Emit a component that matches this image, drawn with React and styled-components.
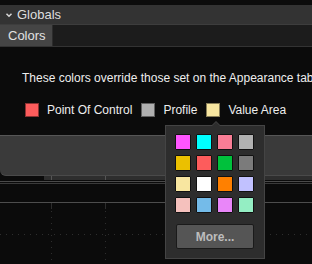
import React from 'react';
import styled, { createGlobalStyle } from 'styled-components';

const GlobalStyle = createGlobalStyle`
  html, body {
    margin: 0;
    padding: 0;
    background: #0b0b0b;
    overflow: hidden;
  }
  body {
    font-family: 'Liberation Sans', Arial, sans-serif;
    color: #e6e6e6;
  }
`;

const legend = [
  { label: 'Point Of Control', color: '#fd5c5c' },
  { label: 'Profile', color: '#b0b0b0' },
  { label: 'Value Area', color: '#f8e6a0' },
];

const palette = [
  '#ff55ff', '#00ffff', '#f97d95', '#b1b1b1',
  '#ebc000', '#fd5c5c', '#00c13c', '#7b7b7b',
  '#f8e6a0', '#ffffff', '#ff8000', '#c1c1ff',
  '#f5c1bd', '#74bbe9', '#e986f9', '#94eec3',
];

const App = () => (
  <Page>
    <GlobalStyle />
    <TopGap />
    <Header>
      <Chevron viewBox="0 0 8 8">
        <path d="M1.5 2.8 L4 5.2 L6.5 2.8" />
      </Chevron>
      Globals
    </Header>
    <TabBar>
      <Tab>Colors</Tab>
    </TabBar>

    <Content>
      <Description>These colors override those set on the Appearance tab</Description>
      <Legend>
        {legend.map((item) => (
          <LegendItem key={item.label}>
            <Swatch color={item.color} />
            <span>{item.label}</span>
          </LegendItem>
        ))}
      </Legend>

      <Popover>
        <Grid>
          {palette.map((c) => (
            <Cell key={c} color={c} />
          ))}
        </Grid>
        <MoreButton>More...</MoreButton>
      </Popover>
    </Content>

    <Panel />
    <Chart width="312" height="88" viewBox="0 0 312 88">
      <rect x="44" y="0" width="268" height="4" fill="#2e2e2e" />
      <line x1="51.5" y1="0" x2="51.5" y2="4" stroke="#555" />
      <line x1="105.5" y1="0" x2="105.5" y2="4" stroke="#555" />
      <line x1="0" y1="5.5" x2="312" y2="5.5" stroke="#4a4a4a" />
      <line x1="0" y1="7.5" x2="312" y2="7.5" stroke="#3a3a3a" />
      <line x1="0" y1="26.5" x2="312" y2="26.5" stroke="#4d4d4d" />
      <line x1="51.5" y1="27" x2="51.5" y2="33" stroke="#2c2c2c" />
      <line x1="105.5" y1="27" x2="105.5" y2="33" stroke="#2c2c2c" />
      <g stroke="#2e2e2e" strokeDasharray="1 5">
        <line x1="51.5" y1="35" x2="51.5" y2="88" />
        <line x1="105.5" y1="35" x2="105.5" y2="88" />
        <line x1="0" y1="58.5" x2="312" y2="58.5" />
      </g>
    </Chart>
  </Page>
);

const Page = styled.div`
  width: 312px;
  height: 264px;
  display: flex;
  flex-direction: column;
`;

const TopGap = styled.div`
  height: 5px;
  background: #0c0c0c;
`;

const Header = styled.div`
  height: 19px;
  display: flex;
  align-items: center;
  gap: 4px;
  padding-left: 5px;
  background: #333333;
  border-bottom: 1px solid #3d3d3d;
  font-size: 13px;
  color: #dedede;
`;

const Chevron = styled.svg`
  width: 8px;
  height: 8px;
  fill: none;
  stroke: #d8d8d8;
  stroke-width: 1.5;
`;

const TabBar = styled.div`
  height: 21px;
  display: flex;
  background: #1c1c1c;
  border-bottom: 1px solid #333;
`;

const Tab = styled.div`
  width: 53px;
  display: flex;
  align-items: center;
  padding-left: 8px;
  box-sizing: border-box;
  background: #454545;
  border-right: 1px solid #2c2c2c;
  font-size: 13px;
  color: #e2e2e2;
`;

const Content = styled.div`
  position: relative;
  height: 88px;
  box-sizing: border-box;
  padding: 24px 0 0 22px;
`;

const Description = styled.div`
  font-size: 12px;
  line-height: 14px;
  white-space: nowrap;
  color: #eeeeee;
`;

const Legend = styled.div`
  display: flex;
  gap: 9px;
  margin-top: 18px;
  padding-left: 3px;
`;

const LegendItem = styled.div`
  display: flex;
  align-items: center;
  gap: 8px;
  font-size: 12px;
  line-height: 14px;
  color: #eeeeee;
`;

const Swatch = styled.div`
  width: 14px;
  height: 14px;
  box-sizing: border-box;
  background: ${({ color }) => color};
  border: 1px solid rgba(0, 0, 0, 0.45);
`;

const Popover = styled.div`
  position: absolute;
  left: 165px;
  top: 78px;
  width: 100px;
  height: 134px;
  box-sizing: border-box;
  padding: 8px 9px 0 9px;
  background: #2d2d2d;
  border: 1px solid #444;
  z-index: 2;

  &::before {
    content: '';
    position: absolute;
    left: 45px;
    top: -5px;
    border-left: 5px solid transparent;
    border-right: 5px solid transparent;
    border-bottom: 5px solid #444;
  }
  &::after {
    content: '';
    position: absolute;
    left: 46px;
    top: -4px;
    border-left: 4px solid transparent;
    border-right: 4px solid transparent;
    border-bottom: 4px solid #2d2d2d;
  }
`;

const Grid = styled.div`
  display: grid;
  grid-template-columns: repeat(4, 16px);
  gap: 5px;
`;

const Cell = styled.div`
  width: 16px;
  height: 16px;
  box-sizing: border-box;
  background: ${({ color }) => color};
  border: 1px solid #111;
  border-radius: 1px;
`;

const MoreButton = styled.div`
  margin: 11px 0 0 1px;
  width: 78px;
  height: 25px;
  box-sizing: border-box;
  display: flex;
  align-items: center;
  justify-content: center;
  background: #555555;
  border: 1px solid #1a1a1a;
  border-radius: 2px;
  font-size: 12px;
  font-weight: bold;
  color: #bdbdbd;
`;

const Panel = styled.div`
  height: 41px;
  box-sizing: border-box;
  background: #3a3a3a;
  border-top: 1px solid #565656;
  border-bottom: 1px solid #4a4a4a;
  border-bottom-left-radius: 6px;
`;

const Chart = styled.svg`
  display: block;
`;

export default App;
